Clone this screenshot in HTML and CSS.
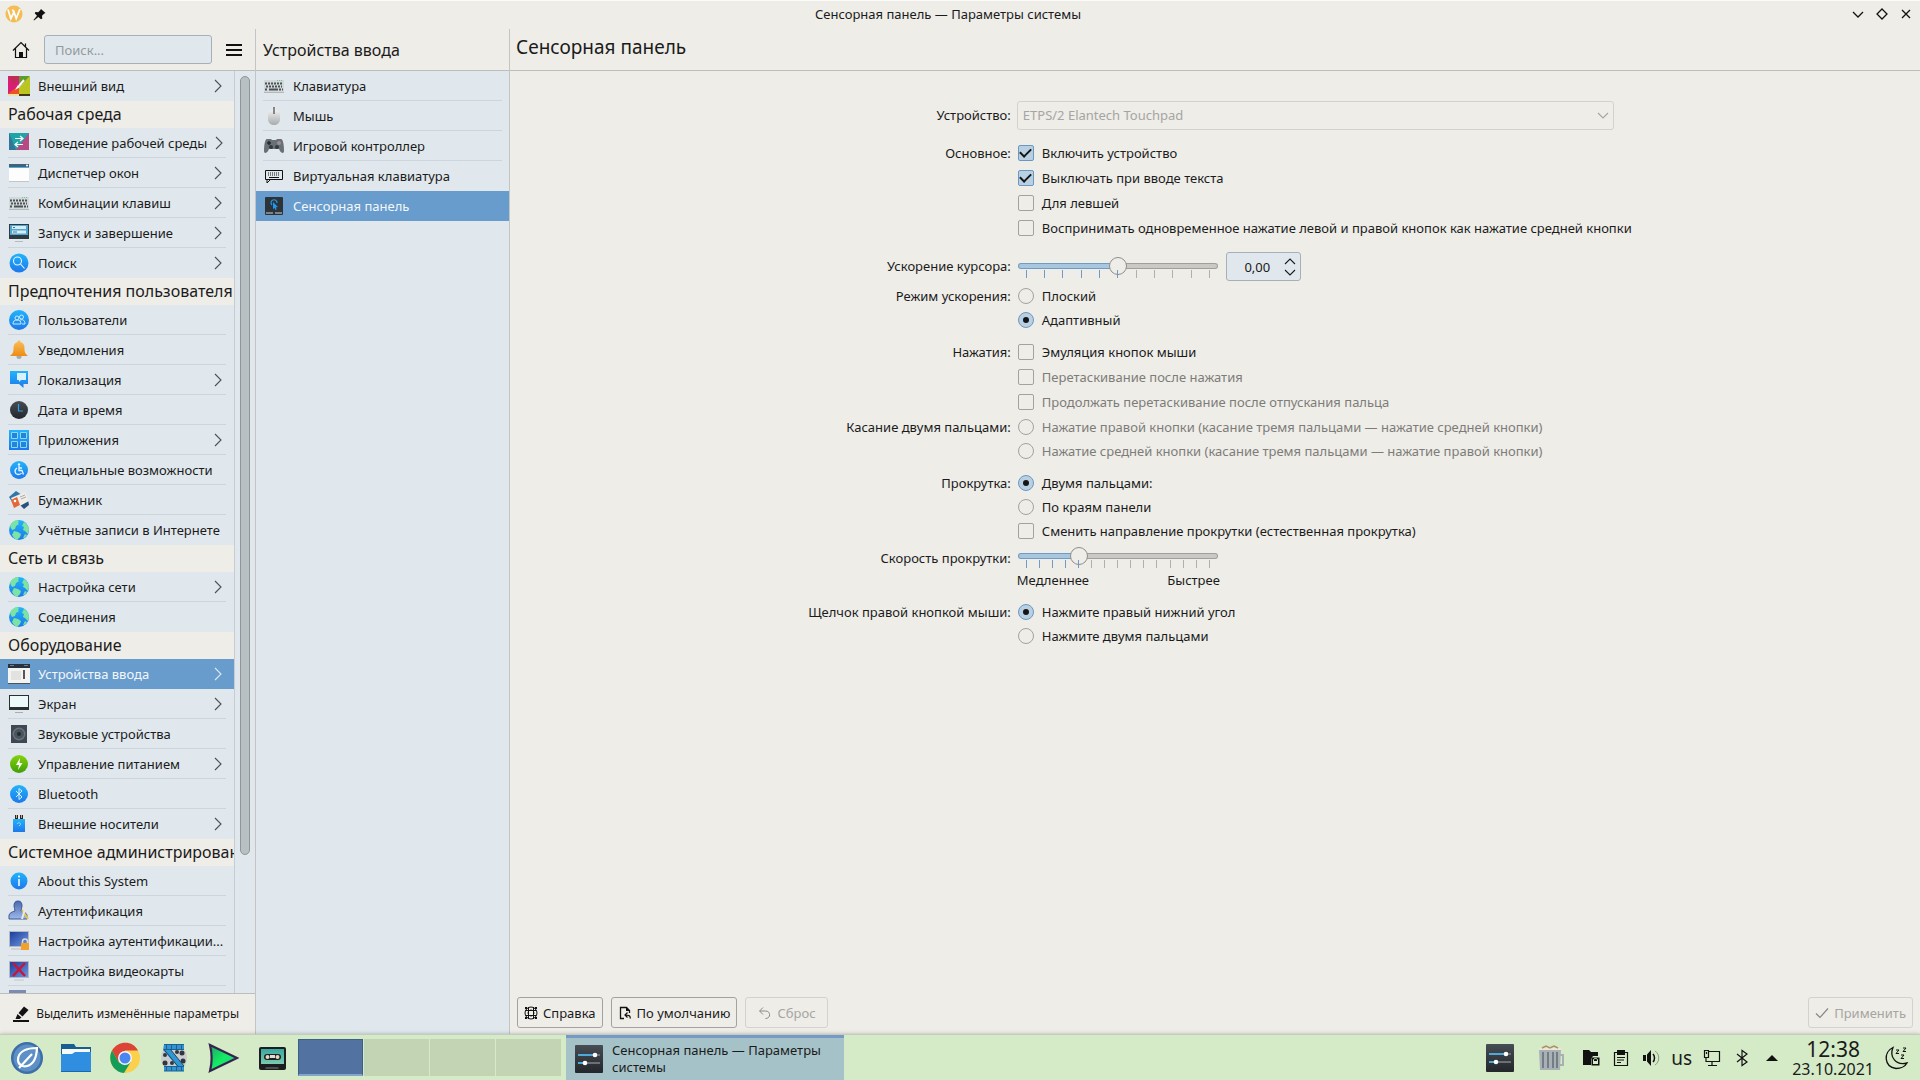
FILE: index.html
```html
<!DOCTYPE html>
<html lang="ru">

<head>
  <meta charset="UTF-8" />
  <meta name="viewport" content="width=device-width, initial-scale=1.0" />
  <title>Сенсорная панель — Параметры системы</title>
  <link rel="stylesheet" href="styles.css">
</head>

<body>
  <!-- shared icons -->
  <svg class="sprite" aria-hidden="true">
    <defs>
      <linearGradient id="blue" x1="0" y1="0" x2="0" y2="1">
        <stop offset="0" stop-color="#22b4fb" />
        <stop offset="1" stop-color="#1d78ea" />
      </linearGradient>
      <linearGradient id="green" x1="0" y1="0" x2="0" y2="1">
        <stop offset="0" stop-color="#86d40c" />
        <stop offset="1" stop-color="#3f9e0a" />
      </linearGradient>
      <linearGradient id="dark" x1="0" y1="0" x2="0" y2="1">
        <stop offset="0" stop-color="#474d54" />
        <stop offset="1" stop-color="#23272b" />
      </linearGradient>
      <linearGradient id="orange" x1="0" y1="0" x2="0" y2="1">
        <stop offset="0" stop-color="#f8bf5a" />
        <stop offset="1" stop-color="#ee8c12" />
      </linearGradient>
      <linearGradient id="silver" x1="0" y1="0" x2="0" y2="1">
        <stop offset="0" stop-color="#f2f2f2" />
        <stop offset="1" stop-color="#a9abad" />
      </linearGradient>
      <linearGradient id="navy" x1="0" y1="0" x2="1" y2="1">
        <stop offset="0" stop-color="#1c3f9c" />
        <stop offset="1" stop-color="#6f96dc" />
      </linearGradient>
      <linearGradient id="steel" x1="0" y1="0" x2="0" y2="1">
        <stop offset="0" stop-color="#4a69b0" />
        <stop offset="1" stop-color="#9db8ea" />
      </linearGradient>
      <linearGradient id="play" x1="0" y1="0" x2="1" y2="1">
        <stop offset="0" stop-color="#1fa36a" />
        <stop offset=".5" stop-color="#12ec62" />
        <stop offset="1" stop-color="#2fc2a8" />
      </linearGradient>
      <linearGradient id="teal" x1="0" y1="0" x2="0" y2="1">
        <stop offset="0" stop-color="#3aa7a0" />
        <stop offset="1" stop-color="#7ccab0" />
      </linearGradient>
    </defs>
    <symbol id="chevron" viewBox="0 0 8 14">
      <path d="M1 1l6 6-6 6" fill="none" stroke="currentColor" stroke-width="1.1" />
    </symbol>
    <symbol id="down" viewBox="0 0 12 7">
      <path d="M1 1l5 5 5-5" fill="none" stroke="currentColor" stroke-width="1.1" />
    </symbol>
    <symbol id="keyboard" viewBox="0 0 22 22">
      <rect x="1" y="5" width="20" height="12" fill="#d3d9da" />
      <path d="M1 17.5h20" stroke="#b3b9bb" />
      <path d="M2 8.500h18M2 14.500h3m11 0h4" stroke="#4b5355" stroke-width="2" stroke-dasharray="2 1" />
      <path d="M3 11.500h16" stroke="#4b5355" stroke-width="2" stroke-dasharray="2 1" />
      <path d="M6 14.500h9" stroke="#4b5355" stroke-width="2" />
      <path d="M14 5.500h6" stroke="#6fc4a4" stroke-dasharray="1 1" />
    </symbol>
    <symbol id="globe" viewBox="0 0 22 22">
      <circle cx="11" cy="11" r="10" fill="url(#blue)" />
      <path d="M2 7c1-3 4-5.500 7-6l2 1-1 2 1 1-3 2-1 3-3 1zM16 3c3 1.500 5 5 5 8l-1 4-3-3-2-1 1-3-2-1zM6 12l4 1 3 2-1 3-3 3-3-2-2-3z" fill="#7be3a3" />
      <path d="M17 15l2 1-2 2.500-2 .5z" fill="#7be3a3" />
    </symbol>
    <symbol id="sliders" viewBox="0 0 28 28">
      <rect width="28" height="28" rx="1" fill="url(#dark)" />
      <path d="M3 10h22M3 18h22" stroke="#6b7077" stroke-width="2" />
      <path d="M3 10h16M3 18h6" stroke="#4fa9d8" stroke-width="2" />
      <circle cx="20" cy="10" r="2.300" fill="#fff" />
      <circle cx="10" cy="18" r="2.300" fill="#fff" />
    </symbol>
  </svg>

  <header class="titlebar">
    <div class="titlebar-left">
      <svg width="18" height="18" viewBox="0 0 18 18">
        <circle cx="9" cy="9" r="8.500" fill="#f4bc52" />
        <path d="M3 4.500l2.800 9L9 7l2.200 6.500L15 4M7.500 4.500L9 8" fill="none" stroke="#fff" stroke-width="1.800" />
      </svg>
      <svg width="13" height="13" viewBox="0 0 13 13">
        <path d="M8 1l4.500 4-1.500.8-2 2 .3 2.700-1.300.8L5.300 9 1 12.500.5 12 4 7.700 1.700 5.300l.8-1.300 2.700.3 2-2z" fill="#111" />
      </svg>
    </div>
    <h1 class="window-title">Сенсорная панель — Параметры системы</h1>
    <div class="titlebar-buttons">
      <button aria-label="Свернуть"><svg width="12" height="12" viewBox="0 0 12 12"><path d="M1 4l5 5 5-5" /></svg></button>
      <button aria-label="Развернуть"><svg width="12" height="12" viewBox="0 0 12 12"><path d="M6 1l5 5-5 5-5-5z" /></svg></button>
      <button aria-label="Закрыть"><svg width="12" height="12" viewBox="0 0 12 12"><path d="M2 2l8 8M10 2l-8 8" /></svg></button>
    </div>
  </header>

  <div class="window">
    <aside class="sidebar">
      <div class="pane-header toolbar">
        <button class="tool" aria-label="Домой">
          <svg width="18" height="18" viewBox="0 0 18 18">
            <path d="M1 9.500L9 1.500l8 8M3.500 7.500v9h11v-9M13.500 6V2.500" fill="none" stroke="#111" stroke-width="1.200" />
            <path d="M7 11h4v6H7z" fill="#111" />
          </svg>
        </button>
        <input class="search" type="text" placeholder="Поиск..." aria-label="Поиск">
        <button class="tool" aria-label="Меню">
          <svg width="16" height="12" viewBox="0 0 16 12"><path d="M0 1h16M0 6h16M0 11h16" stroke="#111" stroke-width="2" /></svg>
        </button>
      </div>
      <div class="scroll">
        <nav class="categories">
          <ul class="menu">
            <li><a href="#">
              <svg viewBox="0 0 22 22"><path d="M0 1h11v18H0z" fill="#d81e78" /><path d="M11 1h11L11 13z" fill="#5f9c2b" /><path d="M22 1v18H11v-6z" fill="#bcc520" /><path d="M0 1h11L6 10z" fill="#c12d52" /><path d="M0 19l11-9v9z" fill="#ee4f24" /><path d="M0 19h11v2H0z" fill="#f4dfa4" /><path d="M11 19h11v2H11z" fill="#443715" /><path d="M16 5l-5 6" stroke="#fff" stroke-width="2" /><path d="M10 10l-3 5 5-3z" fill="#fff" /></svg>
              <span>Внешний вид</span><svg class="chevron"><use href="#chevron" /></svg></a></li>
          </ul>
          <h2>Рабочая среда</h2>
          <ul class="menu">
            <li><a href="#">
              <svg viewBox="0 0 22 22"><path d="M1 1h20v17H1z" fill="#1fa4a8" /><path d="M21 1v17H8z" fill="#b64a84" /><path d="M1 1l7 17H1z" fill="#31759b" /><path d="M1 18h20v1H1z" fill="#e4e4e4" /><path d="M7 6.500h8M7 12.500h8M12 4l3 2.500L12 9M10 10l-3 2.500 3 2.500" fill="none" stroke="#fff" stroke-width="1.200" /></svg>
              <span>Поведение рабочей среды</span><svg class="chevron"><use href="#chevron" /></svg></a></li>
            <li><a href="#">
              <svg viewBox="0 0 22 22"><path d="M1 2h20v17H1z" fill="#fdfdfd" /><path d="M1 2h20v3H1z" fill="#44617a" /><path d="M1 5h20v1H1z" fill="#4fb0dd" /><path d="M1 19.500h20" stroke="#c2c6c8" /><circle cx="19" cy="3.500" r="1" fill="#fff" /></svg>
              <span>Диспетчер окон</span><svg class="chevron"><use href="#chevron" /></svg></a></li>
            <li><a href="#"><svg><use href="#keyboard" /></svg><span>Комбинации клавиш</span><svg class="chevron"><use href="#chevron" /></svg></a></li>
            <li><a href="#">
              <svg viewBox="0 0 22 22"><path d="M1 2h20v15H1z" fill="#2e3940" /><path d="M2 3h18v10H2z" fill="#52a5cf" /><path d="M4 5.500h14M4 10h14" stroke="#d5edf8" stroke-width="3" /><path d="M5 5.500h2M5 10h4" stroke="#357796" stroke-width="1" /><path d="M7 19.500h8" stroke="#b4babd" /></svg>
              <span>Запуск и завершение</span><svg class="chevron"><use href="#chevron" /></svg></a></li>
            <li><a href="#">
              <svg viewBox="0 0 22 22"><circle cx="11" cy="11" r="9.500" fill="url(#blue)" /><circle cx="9.500" cy="9" r="4" fill="none" stroke="#e8f6ff" stroke-width="1.100" /><path d="M12.500 12l4 4.500" stroke="#e8f6ff" stroke-width="1.100" /></svg>
              <span>Поиск</span><svg class="chevron"><use href="#chevron" /></svg></a></li>
          </ul>
          <h2>Предпочтения пользователя</h2>
          <ul class="menu">
            <li><a href="#">
              <svg viewBox="0 0 22 22"><circle cx="11" cy="11" r="10" fill="url(#blue)" /><g fill="none" stroke="#c9ebff"><circle cx="9" cy="9" r="2" /><circle cx="13.500" cy="8" r="2" /><path d="M5 15c0-3 1.500-4 4-4s4 1 4 4zM12 11c3-1 5 .5 5 4h-3" /></g></svg>
              <span>Пользователи</span></a></li>
            <li><a href="#">
              <svg viewBox="0 0 22 22"><circle cx="11" cy="17.500" r="2.500" fill="#a9a9ad" /><path d="M11 1.500c1 0 1.500.7 1.500 1.500 3 1 4 3 4 6 0 4 .5 5.500 3.500 8H2c3-2.500 3.500-4 3.500-8 0-3 1-5 4-6 0-.8.5-1.500 1.500-1.500z" fill="url(#orange)" /></svg>
              <span>Уведомления</span></a></li>
            <li><a href="#">
              <svg viewBox="0 0 22 22"><path d="M2 2h18v13h-4.500v4L11 15H2z" fill="url(#blue)" /><path d="M9 4h9v7h-5l-2 2v-2H9z" fill="#d9f0fd" /></svg>
              <span>Локализация</span><svg class="chevron"><use href="#chevron" /></svg></a></li>
            <li><a href="#">
              <svg viewBox="0 0 22 22"><circle cx="11" cy="11" r="9" fill="url(#dark)" /><path d="M10.500 5v7h4.500" fill="none" stroke="#2d9de0" stroke-width="1.200" /></svg>
              <span>Дата и время</span></a></li>
            <li><a href="#">
              <svg viewBox="0 0 22 22"><path d="M1 1h20v20H1z" fill="url(#blue)" /><path d="M3.500 3.500h6v6h-6zM12.500 3.500h6v6h-6zM3.500 12.500h6v6h-6zM12.500 12.500h6v6h-6z" fill="#1f86d8" stroke="#8bd6fb" /></svg>
              <span>Приложения</span><svg class="chevron"><use href="#chevron" /></svg></a></li>
            <li><a href="#">
              <svg viewBox="0 0 22 22"><circle cx="11" cy="11" r="9" fill="url(#blue)" /><circle cx="11" cy="5.500" r="1.200" fill="#e8f6ff" /><path d="M11 7v4.500h3l1.500 4M9 9c-3 2-2.500 6.500 1.500 6.500 1.500 0 2.500-.7 3-1.500M11 9h3" fill="none" stroke="#e8f6ff" stroke-width="1.300" /></svg>
              <span>Специальные возможности</span></a></li>
            <li><a href="#">
              <svg viewBox="0 0 22 22"><path d="M1 8l7-6 6 4-8 10z" fill="#2f76ab" /><path d="M12 16l8-5 1 5-5 4z" fill="#28527e" /><path d="M3 9l14-6 4 9-13 7z" fill="#f0ece6" /><path d="M3 11l6-3 3 8-6 3z" fill="#e2683a" /><circle cx="7" cy="12" r="1.300" fill="#fff" /><path d="M12 8l5-2M13 10l5-2" stroke="#aaa" /></svg>
              <span>Бумажник</span></a></li>
            <li><a href="#"><svg><use href="#globe" /></svg><span>Учётные записи в Интернете</span></a></li>
          </ul>
          <h2>Сеть и связь</h2>
          <ul class="menu">
            <li><a href="#"><svg><use href="#globe" /></svg><span>Настройка сети</span><svg class="chevron"><use href="#chevron" /></svg></a></li>
            <li><a href="#"><svg><use href="#globe" /></svg><span>Соединения</span></a></li>
          </ul>
          <h2>Оборудование</h2>
          <ul class="menu">
            <li class="active"><a href="#">
              <svg viewBox="0 0 22 22"><path d="M0 1h22v4H0z" fill="#273440" /><path d="M2 2.500h4M16 2.500h4" stroke="#71808c" /><path d="M0 5h22v15H0z" fill="#f3f3f2" /><path d="M3 8h10v9H3z" fill="#e2e2e1" /><path d="M16 7v9" stroke="#222" stroke-width="1.500" /><path d="M0 20.500h22" stroke="#49545d" /></svg>
              <span>Устройства ввода</span><svg class="chevron"><use href="#chevron" /></svg></a></li>
            <li><a href="#">
              <svg viewBox="0 0 22 22"><path d="M1 2h20v15H1z" fill="#2b2f32" /><path d="M2 3h18v11H2z" fill="#edf9f8" /><path d="M7 19.500h8" stroke="#a6adb0" /></svg>
              <span>Экран</span><svg class="chevron"><use href="#chevron" /></svg></a></li>
            <li><a href="#">
              <svg viewBox="0 0 22 22"><path d="M3 2h16v18H3z" fill="#3f4850" /><circle cx="11" cy="11" r="6.500" fill="#68737d" /><circle cx="11" cy="11" r="5" fill="#4a545d" /><circle cx="11" cy="11" r="2" fill="#232a31" /></svg>
              <span>Звуковые устройства</span></a></li>
            <li><a href="#">
              <svg viewBox="0 0 22 22"><circle cx="11" cy="11" r="9" fill="url(#green)" /><path d="M12 5l-4 7h3l-1 5 4.500-7h-3z" fill="#fff" /></svg>
              <span>Управление питанием</span><svg class="chevron"><use href="#chevron" /></svg></a></li>
            <li><a href="#">
              <svg viewBox="0 0 22 22"><circle cx="11" cy="11" r="9" fill="url(#blue)" /><path d="M8 8l6 6-3 2.500v-11L14 8l-6 6" fill="none" stroke="#d8f0ff" /></svg>
              <span>Bluetooth</span></a></li>
            <li><a href="#">
              <svg viewBox="0 0 22 22"><path d="M7 2h3v4H7zM12 2h3v4h-3z" fill="#32261c" /><path d="M8 2h1v3H8zM13 2h1v3h-1z" fill="#c8aa80" /><path d="M5 6h12v13H5z" fill="url(#blue)" /><path d="M9 11c1-2 4-1.500 3.500.5L11 13" fill="none" stroke="#9ad9fb" /></svg>
              <span>Внешние носители</span><svg class="chevron"><use href="#chevron" /></svg></a></li>
          </ul>
          <h2>Системное администрирование</h2>
          <ul class="menu">
            <li><a href="#">
              <svg viewBox="0 0 22 22"><circle cx="11" cy="11" r="8.500" fill="url(#blue)" /><circle cx="11" cy="6.500" r="1" fill="#fff" /><path d="M11 9v7" stroke="#fff" stroke-width="1.500" /></svg>
              <span>About this System</span></a></li>
            <li><a href="#">
              <svg viewBox="0 0 22 22"><path d="M10 1c3 0 4 2 4 5 0 2-1 3-1 5 3 1 6 2 6 5v3H1v-3c0-3 3-4 6-5 0-2-1-3-1-5 0-3 1-5 4-5z" fill="url(#steel)" stroke="#3d5793" /><path d="M14 10l6 9" stroke="#e9c63c" stroke-width="2" /><path d="M17 9l-3 10" stroke="#e6e9ed" stroke-width="2" /></svg>
              <span>Аутентификация</span></a></li>
            <li><a href="#">
              <svg viewBox="0 0 22 22"><path d="M1 1h20v16H1z" fill="#b4bac5" /><path d="M2 2h18v14H2z" fill="url(#navy)" /><path d="M3 18h11v2H3z" fill="#cfd2d6" /><path d="M14.500 13v-1.500c0-3.500 5-3.500 5 0V13" fill="none" stroke="#d9dcdf" stroke-width="1.500" /><path d="M13 13h8v7h-8z" fill="#f2a12b" /></svg>
              <span>Настройка аутентификации...</span></a></li>
            <li><a href="#">
              <svg viewBox="0 0 22 22"><path d="M1 1h20v17H1z" fill="#b4bac5" /><path d="M2 2h18v15H2z" fill="url(#navy)" /><path d="M6 19h10v2H6z" fill="#d3d6da" /><path d="M5 3l12 13M17 3L5 16" stroke="#c5163d" stroke-width="2.500" /></svg>
              <span>Настройка видеокарты</span></a></li>
            <li><a href="#">
              <svg viewBox="0 0 22 22"><path d="M1 0h17v16H1z" fill="#7e8bb0" /></svg></a></li>
          </ul>
        </nav>
        <div class="scrollbar"><div class="thumb"></div></div>
      </div>
      <button class="highlight">
        <svg width="18" height="18" viewBox="0 0 18 18"><path d="M1 16h16" stroke="#111" stroke-width="2" /><path d="M12 1.500L16.500 5l-6 6.500-4-3.500zM5.500 9l4 3.500-2 1.500H3.500z" fill="#111" /></svg>
        Выделить изменённые параметры
      </button>
    </aside>

    <section class="modules">
      <h2 class="pane-header">Устройства ввода</h2>
      <ul class="menu">
        <li><a href="#"><svg><use href="#keyboard" /></svg><span>Клавиатура</span></a></li>
        <li><a href="#">
          <svg viewBox="0 0 22 22"><path d="M5 9c0-6 12-6 12 0v5c0 8-12 8-12 0z" fill="url(#silver)" /><path d="M11 2v7" stroke="#666" stroke-width="1.500" /></svg>
          <span>Мышь</span></a></li>
        <li><a href="#">
          <svg viewBox="0 0 22 22"><path d="M4 4h4l1 1h4l1-1h4c2 0 3 6 3 12 0 3-3 2-4 0l-1-2H6l-1 2c-1 2-4 3-4 0C1 10 2 4 4 4z" fill="#697077" /><path d="M4 8h4M6 6v4" stroke="#25292d" stroke-width="1.500" /><circle cx="8" cy="12" r="2" fill="#353a3f" /><circle cx="14" cy="12" r="2" fill="#353a3f" /><circle cx="16" cy="8" r="2" fill="#9a8f93" /></svg>
          <span>Игровой контроллер</span></a></li>
        <li><a href="#">
          <svg viewBox="0 0 22 22"><path d="M2.500 5.500h17v9h-17zM4 15v3l3-3" fill="none" stroke="#111" /><path d="M5 8h12M5 10h12" stroke="#111" stroke-dasharray="1 1" /><path d="M6 12.500h10" stroke="#111" /></svg>
          <span>Виртуальная клавиатура</span></a></li>
        <li class="active"><a href="#">
          <svg viewBox="0 0 22 22"><rect x="2" y="2" width="18" height="18" rx="1" fill="#2e3338" /><path d="M3 17h7v2H3zM12 17h7v2h-7z" fill="#7d8388" /><path d="M9 10a3 3 0 1 1 5-2" fill="none" stroke="#1d99f3" stroke-width="1.200" /><path d="M10 7l5 5-2 .3.500 2.200-1 .5-1-2-1.500 1z" fill="#1d99f3" /></svg>
          <span>Сенсорная панель</span></a></li>
      </ul>
    </section>

    <main class="content">
      <h2 class="pane-header page-title">Сенсорная панель</h2>

      <form class="settings">
        <div class="row gap-large">
          <label class="name tall" for="device">Устройство:</label>
          <div class="select-box">
            <select id="device" disabled>
              <option>ETPS/2 Elantech Touchpad</option>
            </select>
            <svg class="arrow"><use href="#down" /></svg>
          </div>
        </div>

        <div class="row gap-large" role="group" aria-labelledby="general">
          <span class="name" id="general">Основное:</span>
          <div class="options">
            <label class="check"><input type="checkbox" checked>Включить устройство</label>
            <label class="check"><input type="checkbox" checked>Выключать при вводе текста</label>
            <label class="check"><input type="checkbox">Для левшей</label>
            <label class="check"><input type="checkbox">Воспринимать одновременное нажатие левой и правой кнопок как нажатие средней кнопки</label>
          </div>
        </div>

        <div class="row gap-small">
          <label class="name tall" for="accel">Ускорение курсора:</label>
          <div class="accel">
            <div class="slider" style="--fill: 50%">
              <input id="accel" type="range" min="0" max="10" value="5">
              <div class="ticks">
                <i class="on"></i><i class="on"></i><i class="on"></i><i class="on"></i><i class="on"></i><i class="on"></i><i></i><i></i><i></i><i></i><i></i>
              </div>
            </div>
            <div class="spin">
              <input type="text" value="0,00" aria-label="Ускорение курсора, значение">
              <div class="spin-buttons">
                <button type="button" aria-label="Больше"><svg class="up"><use href="#down" /></svg></button>
                <button type="button" aria-label="Меньше"><svg><use href="#down" /></svg></button>
              </div>
            </div>
          </div>
        </div>

        <div class="row gap" role="group" aria-labelledby="profile">
          <span class="name" id="profile">Режим ускорения:</span>
          <div class="options">
            <label class="radio"><input type="radio" name="profile">Плоский</label>
            <label class="radio"><input type="radio" name="profile" checked>Адаптивный</label>
          </div>
        </div>

        <div class="row" role="group" aria-labelledby="tapping">
          <span class="name" id="tapping">Нажатия:</span>
          <div class="options">
            <label class="check"><input type="checkbox">Эмуляция кнопок мыши</label>
            <label class="check off"><input type="checkbox" disabled>Перетаскивание после нажатия</label>
            <label class="check off"><input type="checkbox" disabled>Продолжать перетаскивание после отпускания пальца</label>
          </div>
        </div>

        <div class="row gap" role="group" aria-labelledby="two-finger">
          <span class="name" id="two-finger">Касание двумя пальцами:</span>
          <div class="options">
            <label class="radio off"><input type="radio" name="tap" disabled>Нажатие правой кнопки (касание тремя пальцами — нажатие средней кнопки)</label>
            <label class="radio off"><input type="radio" name="tap" disabled>Нажатие средней кнопки (касание тремя пальцами — нажатие правой кнопки)</label>
          </div>
        </div>

        <div class="row" role="group" aria-labelledby="scrolling">
          <span class="name" id="scrolling">Прокрутка:</span>
          <div class="options">
            <label class="radio"><input type="radio" name="scroll" checked>Двумя пальцами:</label>
            <label class="radio"><input type="radio" name="scroll">По краям панели</label>
            <label class="check"><input type="checkbox">Сменить направление прокрутки (естественная прокрутка)</label>
          </div>
        </div>

        <div class="row gap-large">
          <label class="name tall" for="speed">Скорость прокрутки:</label>
          <div class="speed">
            <div class="slider" style="--fill: 29%">
              <input id="speed" type="range" min="0" max="14" value="4">
              <div class="ticks">
                <i class="on"></i><i class="on"></i><i class="on"></i><i class="on"></i><i class="on"></i><i></i><i></i><i></i><i></i><i></i><i></i><i></i><i></i><i></i><i></i>
              </div>
            </div>
            <div class="ends"><span>Медленнее</span><span>Быстрее</span></div>
          </div>
        </div>

        <div class="row" role="group" aria-labelledby="right-click">
          <span class="name" id="right-click">Щелчок правой кнопкой мыши:</span>
          <div class="options">
            <label class="radio"><input type="radio" name="click" checked>Нажмите правый нижний угол</label>
            <label class="radio"><input type="radio" name="click">Нажмите двумя пальцами</label>
          </div>
        </div>
      </form>

      <footer class="actions">
        <button>
          <svg viewBox="0 0 16 16"><g fill="none" stroke="#111"><circle cx="8" cy="8" r="6" /><circle cx="8" cy="8" r="3" /><path d="M2.500 5.500h11M2.500 10.500h11M5.500 2v12M10.500 2v12" /></g><path d="M2 2h2v2H2zM12 2h2v2h-2zM2 12h2v2H2zM12 12h2v2h-2z" fill="#111" /></svg>
          Справка</button>
        <button>
          <svg viewBox="0 0 16 16"><path d="M7 13.500H3.500v-11h6l3 3V8" fill="none" stroke="#111" stroke-width="1.300" /><path d="M9 2v4h4z" fill="#111" /><path d="M13 13.500c1-3-2-3.500-5-3.500M10.500 7.500L8 10l2.500 2.500" fill="none" stroke="#111" stroke-width="1.200" /></svg>
          По умолчанию</button>
        <button class="reset" disabled>
          <svg viewBox="0 0 16 16"><path d="M6 2.500L2.500 6 6 9.500M3 6h5.500c5.500 0 5.500 7.500 0 7.500" fill="none" stroke="#8b8a87" /></svg>
          Сброс</button>
        <button class="apply" disabled>
          <svg viewBox="0 0 16 16"><path d="M2 8.500l4 4 8-9" fill="none" stroke="#8b8a87" stroke-width="1.200" /></svg>
          Применить</button>
      </footer>
    </main>
  </div>

  <footer class="taskbar">
    <div class="launchers">
      <button aria-label="Меню приложений">
        <svg viewBox="0 0 32 32"><circle cx="16" cy="16" r="16" fill="#3d6ea8" /><circle cx="16" cy="16" r="13.500" fill="#5d90c6" /><path d="M26 6c-10 0-19 3-19 12 0 9 18 11 19-12zM8 26L21 12" fill="none" stroke="#fff" stroke-width="2.200" /></svg>
      </button>
      <button aria-label="Файлы">
        <svg viewBox="0 0 32 32"><path d="M1 2h13l2 3h15v8H1z" fill="#175f92" /><path d="M2 7h28v6H2z" fill="#f6f8fa" /><path d="M1 12h11l3-2h16v20H1z" fill="#2f8ee0" /><path d="M1 29.500h30" stroke="#1c68ae" /></svg>
      </button>
      <button aria-label="Chrome">
        <svg viewBox="0 0 32 32"><circle cx="16" cy="16" r="15" fill="#fbd04c" /><path d="M3 8.500C9-2 24-2 29 8.500H16L9.500 20z" fill="#db4437" /><path d="M3 8.500C-2 18 4 30 15 31l7-11.500-12 1z" fill="#129d58" /><circle cx="16" cy="16" r="7" fill="#f6f6f6" /><circle cx="16" cy="16" r="5.500" fill="#4b85f0" /></svg>
      </button>
      <button aria-label="Монтаж">
        <svg viewBox="0 0 32 32"><circle cx="16" cy="16" r="13" fill="#c9cdcf" /><g fill="#30363b"><circle cx="7" cy="13" r="2" /><circle cx="7" cy="21" r="2.500" /><circle cx="14" cy="21" r="2" /><circle cx="19" cy="10" r="2" /><circle cx="24" cy="11" r="2.500" /><circle cx="25" cy="19" r="2.500" /></g><path d="M6 2.500h20v5H12.500L26 24v5H6v-5h13L5 8z" fill="#2f96d6" /><path d="M6 2.500h20M6 7.500h20M6 24.500h20M6 29h20" stroke="#1f5f92" /><path d="M8 5h18M8 27h18" stroke="#1f5f92" stroke-width="4" stroke-dasharray="1 4" /><path d="M6 7.500l14 17M12.500 7.500L26 24" stroke="#27435a" /></svg>
      </button>
      <button aria-label="Видео">
        <svg viewBox="0 0 32 32"><path d="M3 3l27 13L3 29c2-8 2-18 0-26z" fill="url(#play)" stroke="#35234e" stroke-width="2.200" /></svg>
      </button>
      <button aria-label="Кассета">
        <svg viewBox="0 0 32 32"><rect x="3" y="5" width="27" height="23" rx="2" fill="#1b1d1e" /><path d="M5 7h23v15H5z" fill="url(#teal)" /><rect x="8" y="12" width="17" height="6" rx="3" fill="#1c211f" /><circle cx="11.500" cy="15" r="2" fill="#e7d9bb" /><circle cx="21.500" cy="15" r="2" fill="#e7d9bb" /><path d="M14 13h5v3h-5z" fill="#ddd" /><path d="M9 27l1-2h12l1 2z" fill="#4c5050" /></svg>
      </button>
    </div>
    <div class="pager">
      <button class="current" aria-label="Рабочий стол 1"></button>
      <button aria-label="Рабочий стол 2"></button>
      <button aria-label="Рабочий стол 3"></button>
      <button aria-label="Рабочий стол 4"></button>
    </div>
    <button class="task">
      <svg width="28" height="28"><use href="#sliders" /></svg>
      <span>Сенсорная панель — Параметры системы</span>
    </button>
    <div class="tray">
      <div class="pinned">
        <svg width="28" height="28"><use href="#sliders" /></svg>
        <svg width="28" height="28" viewBox="0 0 28 28"><path d="M23 11h3v10h-3" fill="none" stroke="#a9b0b1" stroke-width="2" /><path d="M2 4h22v4H2z" fill="#e9e6dc" /><path d="M5 4l4-2 4 2 4-2 4 2" fill="none" stroke="#b08f62" stroke-width="1.500" /><path d="M2 6h22l-1 20H3z" fill="#aab1b5" /><path d="M6 8v16M11 8v16M16 8v16M20 8v16" stroke="#727d86" stroke-width="2" /></svg>
      </div>
      <div class="indicators">
        <svg viewBox="0 0 18 18"><path d="M1 1h6l2 2h7v4h-5l-2 3v6H1z" fill="#111" /><path d="M9.500 8.500h8v8h-8z" fill="#111" /><path d="M11.500 12v-1c0-2 4-2 4 0v1" fill="none" stroke="#d5eac6" /><path d="M11 12h5v3h-5z" fill="#d5eac6" /></svg>
        <svg viewBox="0 0 18 18"><path d="M2.500 3.500h13v13h-13z" fill="none" stroke="#111" stroke-width="1.200" /><path d="M5 1h8v5H5z" fill="#111" /><path d="M5 8.500h8M5 11h7M5 13.500h4" stroke="#111" /></svg>
        <svg viewBox="0 0 18 18"><path d="M1 6h3v6H1zM5 5.500L9 1v16l-4-4.500z" fill="#111" /><path d="M11 5c2 2 2 6 0 8" fill="none" stroke="#111" stroke-width="1.500" /><path d="M13 2c5 3 5 11 0 14" fill="none" stroke="#8e9c86" /></svg>
      </div>
      <span class="layout">us</span>
      <div class="indicators">
        <svg viewBox="0 0 18 18"><path d="M6 2.500h10.500v10H3V9M9 13v3M5 16.500h9" fill="none" stroke="#111" stroke-width="1.200" /><path d="M1.500 1.500h4v7h-4zM3.500 3v2" fill="none" stroke="#111" stroke-width="1.200" /></svg>
        <svg viewBox="0 0 18 18"><path d="M4 5l10 8-5 3.500v-15L14 5 4 13" fill="none" stroke="#111" stroke-width="1.200" /></svg>
        <svg viewBox="0 0 18 18"><path d="M3 12l6-6 6 6z" fill="#111" /></svg>
      </div>
      <div class="clock">
        <time class="time">12:38</time>
        <time class="date">23.10.2021</time>
      </div>
      <svg width="24" height="24" viewBox="0 0 24 24"><path d="M8 1.500C-2 6-1 21 11 22.500c5 0 9-2 11-5.500C11 20 4 11 8 1.500z" fill="none" stroke="#111" stroke-width="1.300" /><path d="M11 4h3l-3 3.500h3M18 2h3l-3 3.500h3M16 9h3l-3 3.500h3" fill="none" stroke="#111" /></svg>
    </div>
  </footer>
</body>

</html>
```
FILE: styles.css
```css
* {
  box-sizing: border-box;
  margin: 0;
  padding: 0;
}

body {
  background-color: #eeede8;
  color: #1b1b1b;
  font-family: 'Noto Sans', sans-serif;
  font-size: 13px;
  line-height: 18px;
  display: flex;
  flex-direction: column;
  height: 100vh;
  overflow: hidden;
}

button,
input,
select {
  font: inherit;
  color: inherit;
  background: none;
  border: none;
}

ul {
  list-style: none;
}

a {
  color: inherit;
  text-decoration: none;
}

svg {
  display: block;
  flex: none;
}

.sprite {
  position: absolute;
  width: 0;
  height: 0;
}

/* window title */
.titlebar {
  display: flex;
  align-items: center;
  height: 29px;
  padding-bottom: 2px;
  border-top: 1px solid #fbfbf9;
}

.titlebar-left {
  display: flex;
  align-items: center;
  gap: 10px;
  width: 48px;
  padding-left: 5px;
}

.window-title {
  flex: 1;
  text-align: center;
  font-size: 13px;
  font-weight: normal;
}

.titlebar-buttons {
  display: flex;
  gap: 12px;
  width: 72px;
  padding-left: 4px;
}

.titlebar-buttons path {
  fill: none;
  stroke: #111;
  stroke-width: 1.3;
}

/* panes */
.window {
  flex: 1;
  display: flex;
  min-height: 0;
}

.pane-header {
  flex: none;
  display: flex;
  align-items: center;
  height: 42px;
  border-bottom: 1px solid #bdbdbb;
  background-color: #eeede8;
}

.sidebar {
  flex: none;
  width: 256px;
  display: flex;
  flex-direction: column;
  border-right: 1px solid #c3c5c5;
}

.toolbar {
  padding: 0 13px 0 12px;
  gap: 14px;
}

.tool {
  flex: none;
}

.search {
  flex: 1;
  min-width: 0;
  height: 29px;
  padding: 0 10px;
  border: 1px solid #a5b0b7;
  border-radius: 3px;
  background-color: #e0e8ed;
}

.search::placeholder {
  color: #939a9e;
}

.scroll {
  flex: 1;
  display: flex;
  min-height: 0;
  background-color: #e0e8ed;
}

.categories {
  flex: 1;
  min-width: 0;
  overflow: hidden;
  border-right: 1px solid #c6cdd2;
}

.categories h2 {
  height: 27px;
  padding-left: 8px;
  line-height: 27px;
  font-size: 16px;
  font-weight: normal;
  white-space: nowrap;
  background-color: #eeede8;
}

.scrollbar {
  flex: none;
  width: 20px;
  padding: 5px 5px 0 5px;
}

.thumb {
  height: 85%;
  border: 1px solid #8f9699;
  border-radius: 5px;
  background-color: #b9c0c3;
}

.menu li {
  height: 30px;
  padding: 0 8px;
}

.menu a {
  display: flex;
  align-items: center;
  gap: 8px;
  height: 30px;
  border-bottom: 1px solid #cbd5db;
  white-space: nowrap;
}

.menu li:last-child a,
.menu .active a,
.menu li:has(+ .active) a {
  border-bottom-color: transparent;
}

.menu .active {
  background-color: #689ccd;
  color: #f3f7fa;
}

.menu svg {
  width: 22px;
  height: 22px;
}

.menu .chevron {
  width: 8px;
  height: 14px;
  margin-left: auto;
  margin-right: 4px;
  color: #4b5054;
}

.menu .active .chevron {
  color: #dce8f2;
}

.highlight {
  flex: none;
  display: flex;
  align-items: center;
  justify-content: flex-end;
  gap: 6px;
  height: 41px;
  padding-right: 16px;
  border-top: 1px solid #bdbdbb;
  font-size: 12px;
}

.modules {
  flex: none;
  width: 254px;
  border-right: 1px solid #c3c5c5;
  background-color: #e0e8ed;
}

.modules .pane-header {
  padding-left: 7px;
  font-size: 16px;
  font-weight: normal;
}

.modules .menu li {
  padding: 0 7px;
}

.content {
  flex: 1;
  display: flex;
  flex-direction: column;
  min-width: 0;
}

.content .page-title {
  padding: 0 6px 6px;
  font-size: 19px;
  font-weight: normal;
}

/* form */
.settings {
  flex: 1;
  display: grid;
  grid-template-columns: auto minmax(auto, 597px);
  column-gap: 6px;
  justify-content: center;
  align-content: start;
  padding: 30px 8px 0 0;
  white-space: nowrap;
}

.row {
  display: grid;
  grid-column: 1 / -1;
  grid-template-columns: subgrid;
}

.options {
  width: 597px;
}

.gap-small {
  margin-bottom: 3px;
}

.gap {
  margin-bottom: 8px;
}

.gap-large {
  margin-bottom: 11px;
}

.name {
  text-align: right;
  line-height: 24px;
}

.name.tall {
  line-height: 28px;
}

.check,
.radio {
  display: flex;
  align-items: center;
  gap: 8px;
  height: 24px;
  padding-left: 1px;
}

.check {
  margin-bottom: 1px;
}

.off {
  color: #7d7c79;
}

.check input,
.radio input {
  appearance: none;
  flex: none;
  display: grid;
  place-content: center;
  width: 16px;
  height: 16px;
  border: 1px solid #a3a29f;
  border-radius: 2px;
}

.radio input {
  border-radius: 50%;
}

.check input:checked,
.radio input:checked {
  border-color: #6a98c3;
  background-color: #b9d0e2;
}

.check input:checked::before {
  content: "";
  width: 9px;
  height: 5px;
  margin-bottom: 3px;
  border-left: 2px solid #151515;
  border-bottom: 2px solid #151515;
  rotate: -45deg;
}

.radio input:checked::before {
  content: "";
  width: 6px;
  height: 6px;
  border-radius: 50%;
  background-color: #151515;
}

.select-box {
  position: relative;
}

.select-box select {
  appearance: none;
  display: block;
  width: 100%;
  height: 29px;
  padding: 0 5px 1px;
  border: 1px solid #d3d2ce;
  border-radius: 3px;
  color: #a6a5a2;
  opacity: 1;
}

.arrow {
  position: absolute;
  top: 11px;
  right: 5px;
  width: 12px;
  height: 7px;
  color: #a6a5a2;
}

.accel {
  display: flex;
  align-items: flex-start;
  gap: 8px;
}

.slider {
  width: 200px;
  margin-left: 1px;
}

.accel .slider {
  padding-top: 5px;
}

.slider input {
  appearance: none;
  display: block;
  width: 100%;
  height: 18px;
}

.slider input::-webkit-slider-runnable-track {
  height: 6px;
  border: 1px solid transparent;
  border-radius: 3px;
  background:
    linear-gradient(to right, #a9c6df var(--fill), #cac9c5 0) padding-box,
    linear-gradient(to right, #6f9bc4 var(--fill), #a09f9c 0) border-box;
}

.slider input::-webkit-slider-thumb {
  appearance: none;
  width: 18px;
  height: 18px;
  margin-top: -7px;
  border: 1px solid #8f8e8b;
  border-radius: 50%;
  background-color: #eeede8;
}

.ticks {
  display: flex;
  justify-content: space-between;
  height: 8px;
  margin-top: -5px;
  padding: 0 8px;
}

.ticks i {
  width: 1px;
  background-color: #b1b0ad;
}

.ticks .on {
  background-color: #6f9bc4;
}

.spin {
  display: flex;
  width: 75px;
  height: 29px;
  border: 1px solid #a5b0b7;
  border-radius: 3px;
  background-color: #e0e8ed;
}

.spin input {
  flex: 1;
  min-width: 0;
  padding-left: 4px;
  text-align: center;
}

.spin-buttons {
  display: flex;
  flex-direction: column;
  justify-content: center;
  gap: 4px;
  width: 16px;
  padding-right: 4px;
}

.spin-buttons svg {
  width: 12px;
  height: 7px;
}

.spin-buttons .up {
  rotate: 180deg;
}

.speed {
  padding-top: 3px;
}

.ends {
  display: flex;
  justify-content: space-between;
  width: 203px;
  margin-top: 3px;
}

.actions {
  display: flex;
  gap: 8px;
  padding: 0 7px 6px;
}

.actions button {
  display: flex;
  align-items: center;
  gap: 4px;
  height: 31px;
  padding: 0 6px 0 5px;
  border: 1px solid #a3a29f;
  border-radius: 3px;
}

.actions svg {
  width: 16px;
  height: 16px;
}

.actions button:disabled {
  border-color: #d3d2ce;
  color: #a6a5a2;
}

.actions .reset {
  padding: 0 11px;
}

.actions .apply {
  margin-left: auto;
}

/* panel */
.taskbar {
  flex: none;
  display: flex;
  height: 46px;
  background-color: #d5eac6;
  border-top: 1px solid #c4cdbb;
  box-shadow: 0 0 4px rgba(0, 0, 0, 0.25);
  position: relative;
}

.launchers {
  display: flex;
  align-items: center;
  gap: 17px;
  padding-left: 11px;
}

.launchers svg {
  width: 32px;
  height: 32px;
}

.pager {
  display: flex;
  gap: 1px;
  padding: 4px 5px 4px 10px;
}

.pager button {
  width: 65px;
  background-color: #c2d4b4;
}

.pager .current {
  border: 1px solid #3f5f88;
  border-bottom: 2px solid #83a5cc;
  background-color: #5273a2;
}

.task {
  display: flex;
  align-items: center;
  gap: 9px;
  width: 278px;
  padding: 0 9px;
  border-top: 3px solid #7799c5;
  background-color: #a5c2c8;
  text-align: left;
  line-height: 17px;
}

.tray {
  display: flex;
  align-items: center;
  gap: 11px;
  margin-left: auto;
  padding-right: 11px;
}

.pinned {
  display: flex;
  gap: 23px;
  padding-right: 6px;
}

.indicators {
  display: flex;
  gap: 12px;
}

.indicators svg {
  width: 18px;
  height: 18px;
}

.layout {
  font-size: 19px;
}

.clock {
  display: flex;
  flex-direction: column;
  align-items: center;
}

.time {
  font-size: 21px;
  line-height: 22px;
}

.date {
  font-size: 16px;
  line-height: 18px;
}
```
